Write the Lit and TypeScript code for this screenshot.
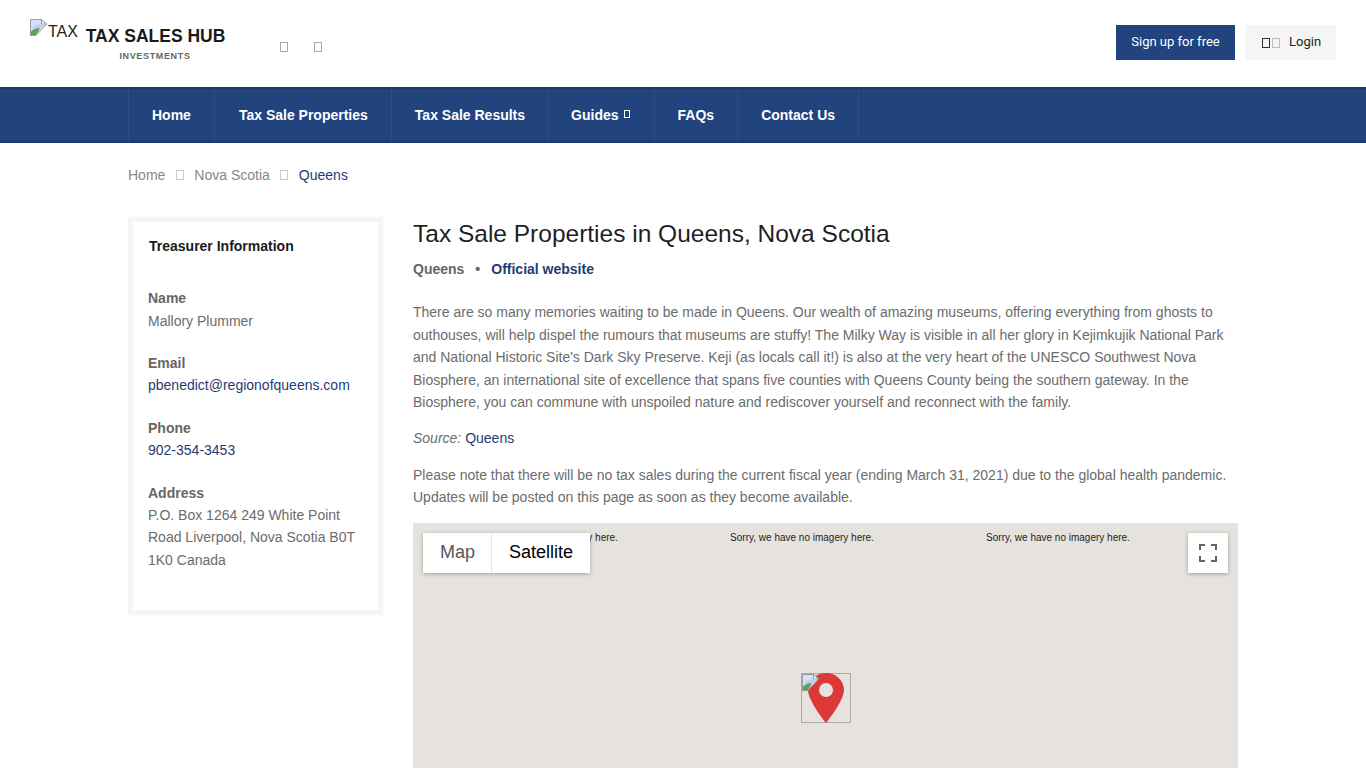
import { LitElement, html, css, svg } from "lit";
import { customElement } from "lit/decorators.js";

const broken = svg`<svg class="broken" width="17" height="17" viewBox="0 0 17 17"><path d="M.5.500h11l5 4.500L6 16.500H.5z" fill="#d5e1f8" stroke="#999"/><path d="M11.500.500v4.500h5z" fill="#fff" stroke="#999"/><path d="M1 9l5-3 4-.5L15 5l-5 4.500z" fill="#bccff2"/><path d="M1 16v-3.500C4 9.500 7 8.500 10 9.500L6 16z" fill="#5fa052"/></svg>`;

@customElement("app-root")
export class AppRoot extends LitElement {
  static styles = css`
    :host { display: block; height: 768px; overflow: hidden; background: #fff; font-family: "Liberation Sans", Arial, sans-serif; font-size: 14px; color: #6c6c6c; line-height: 22.5px; }
    a { text-decoration: none; color: #1f3c74; }
    .tofu { display: inline-block; box-sizing: border-box; width: 8px; height: 10px; border: 1px solid #aaa; }
    header { height: 87px; box-sizing: border-box; padding: 0 30px; display: flex; align-items: flex-start; }
    .logo { display: flex; align-items: flex-start; padding-top: 19px; }
    .alt { display: flex; align-items: flex-start; width: 56px; color: #222; font-size: 16px; line-height: 18px; height: 30px; }
    .alt span { padding-top: 4px; margin-left: 1px; }
    .broken { flex: none; }
    .brand { display: flex; flex-direction: column; align-items: center; width: 139px; }
    .brand b { font-size: 17.5px; line-height: 22px; margin-top: 6px; color: #1a1a1a; white-space: nowrap; }
    .brand small { font-size: 9px; font-weight: bold; letter-spacing: .65px; line-height: 12px; margin: 3px 1px 0 0; color: #666; }
    .social { display: flex; gap: 26px; margin: 42px 0 0 55px; }
    .actions { margin-left: auto; display: flex; gap: 10px; padding-top: 25px; font-family: Roboto, sans-serif; font-size: 13px; }
    .btn { height: 35px; box-sizing: border-box; display: flex; align-items: center; }
    .signup { width: 119px; justify-content: center; background: #21437e; color: #fff; }
    .login { width: 91px; padding-left: 17px; background: #f5f5f5; color: #222; gap: 2px; }
    .login .tofu { border-color: #333; }
    .login .tofu + .tofu { border-color: #bbb; margin-right: 7px; }
    nav { height: 56px; box-sizing: border-box; background: #21437e; border-top: 2px solid #1c3a6e; border-bottom: 2px solid #1c3a6e; padding-left: 128px; display: flex; }
    nav a { color: #fff; font-weight: bold; font-size: 14px; display: flex; align-items: center; gap: 5px; padding: 0 23px; border-left: 1px solid #2c4d86; }
    nav a:nth-child(2) { padding-left: 24px; }
    nav a:nth-child(3) { padding-right: 22px; }
    nav a:nth-child(4) { padding-right: 24px; }
    nav a:last-child { border-right: 1px solid #2c4d86; }
    nav .tofu { border-color: #fff; width: 6px; height: 8px; margin-top: -3px; }
    .crumbs { margin: 0 128px; height: 74px; display: flex; align-items: flex-start; padding-top: 21px; box-sizing: border-box; color: #888; gap: 10.5px; }
    .crumbs .tofu { border-color: #ccc; margin-top: 6px; }
    .crumbs a { color: #1f3c74; }
    .page { margin: 0 128px; display: flex; gap: 30px; align-items: flex-start; }
    aside { width: 255px; height: 398px; box-sizing: border-box; border: 5px solid #f5f5f5; padding: 15px 15px; flex: none; }
    aside h4 { margin: 0 0 32px 1px; font-size: 14px; line-height: 18px; color: #1a1a1a; }
    .field { margin-bottom: 20.3px; }
    .field b { display: block; line-height: 22px; color: #666; }
    .field:first-of-type b { padding-bottom: .5px; }
    main { width: 825px; }
    h1 { margin: 1px 0 0; font-size: 24.5px; font-weight: normal; line-height: 32px; color: #1f1f1f; }
    .meta { margin-top: 9px; font-weight: bold; line-height: 20px; display: flex; gap: 11px; color: #666; }
    p { margin: 0 0 13.8px; }
    .body { margin-top: 22px; }
    .map { position: relative; height: 300px; background: #e6e3df; margin-top: 14.4px; overflow: hidden; }
    .sorry { position: absolute; top: 8px; width: 256px; text-align: center; font: 10px/13px "Liberation Sans", Arial, sans-serif; color: #222; }
    .types { position: absolute; left: 10px; top: 10px; display: flex; height: 40px; background: #fff; box-shadow: 0 1px 4px rgba(0,0,0,.3); font: 18px/38px "Liberation Sans", Arial, sans-serif; }
    .types span { padding: 0 16px 0 17px; color: #565656; }
    .types span + span { color: #000; border-left: 1px solid #e6e6e6; padding-right: 17px; }
    .full { position: absolute; left: 775px; top: 10px; width: 40px; height: 40px; background: #fff; box-shadow: 0 1px 4px rgba(0,0,0,.3); display: flex; align-items: center; justify-content: center; }
    .pin { position: absolute; left: 388px; top: 150px; width: 50px; height: 50px; box-sizing: border-box; border: 1px solid #aaa; }
    .pin .broken { position: absolute; left: 0; top: 0; }
    .pin .mark { position: absolute; left: 6px; top: -1px; }
  `;
  render() {
    return html`
      <header>
        <div class="logo">
          <div class="alt">${broken}<span>TAX</span></div>
          <div class="brand"><b>TAX SALES HUB</b><small>INVESTMENTS</small></div>
        </div>
        <div class="social"><i class="tofu"></i><i class="tofu"></i></div>
        <div class="actions">
          <div class="btn signup">Sign up for free</div>
          <div class="btn login"><i class="tofu"></i><i class="tofu"></i>Login</div>
        </div>
      </header>
      <nav>
        <a>Home</a><a>Tax Sale Properties</a><a>Tax Sale Results</a><a>Guides <i class="tofu"></i></a><a>FAQs</a><a>Contact Us</a>
      </nav>
      <div class="crumbs"><span>Home</span><i class="tofu"></i><span>Nova Scotia</span><i class="tofu"></i><a>Queens</a></div>
      <div class="page">
        <aside>
          <h4>Treasurer Information</h4>
          <div class="field"><b>Name</b>Mallory Plummer</div>
          <div class="field"><b>Email</b><a>pbenedict@regionofqueens.com</a></div>
          <div class="field"><b>Phone</b><a>902-354-3453</a></div>
          <div class="field"><b>Address</b>P.O. Box 1264 249 White Point Road Liverpool, Nova Scotia B0T 1K0 Canada</div>
        </aside>
        <main>
          <h1>Tax Sale Properties in Queens, Nova Scotia</h1>
          <div class="meta"><span>Queens</span><span>•</span><a>Official website</a></div>
          <div class="body">
            <p>There are so many memories waiting to be made in Queens. Our wealth of amazing museums, offering everything from ghosts to outhouses, will help dispel the rumours that museums are stuffy! The Milky Way is visible in all her glory in Kejimkujik National Park and National Historic Site's Dark Sky Preserve. Keji (as locals call it!) is also at the very heart of the UNESCO Southwest Nova Biosphere, an international site of excellence that spans five counties with Queens County being the southern gateway. In the Biosphere, you can commune with unspoiled nature and rediscover yourself and reconnect with the family.</p>
            <p><em>Source:</em> <a>Queens</a></p>
            <p>Please note that there will be no tax sales during the current fiscal year (ending March 31, 2021) due to the global health pandemic. Updates will be posted on this page as soon as they become available.</p>
          </div>
          <div class="map">
            <div class="sorry" style="left:5px">Sorry, we have no imagery here.</div>
            <div class="sorry" style="left:261px">Sorry, we have no imagery here.</div>
            <div class="sorry" style="left:517px">Sorry, we have no imagery here.</div>
            <div class="types"><span>Map</span><span>Satellite</span></div>
            <div class="full"><svg width="18" height="18" viewBox="0 0 18 18" fill="none" stroke="#666" stroke-width="2"><path d="M1 6V1h5M12 1h5v5M17 12v5h-5M6 17H1v-5"/></svg></div>
            <div class="pin">
              <svg class="mark" width="36" height="50" viewBox="0 0 36 50"><path fill-rule="evenodd" d="M18 0C8 0 0 7.500 0 17c0 11 18 33 18 33s18-22 18-33C36 7.500 28 0 18 0zm0 10a7 7 0 1 1 0 14 7 7 0 0 1 0-14z" fill="#dc3838"/></svg>
              ${broken}
            </div>
          </div>
        </main>
      </div>
    `;
  }
}
